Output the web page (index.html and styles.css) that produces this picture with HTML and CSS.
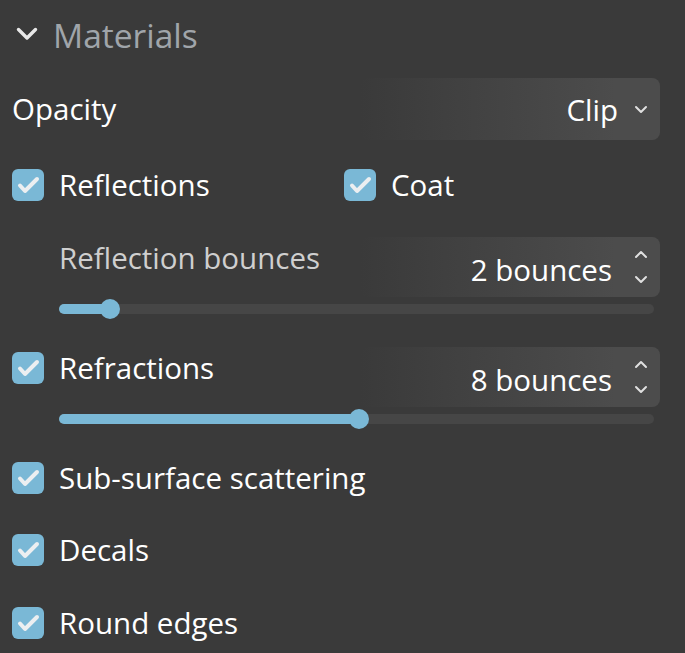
FILE: index.html
```html
<!DOCTYPE html>
<html>
<head>
<meta charset="utf-8">
<link rel="stylesheet" href="styles.css">
</head>
<body>
<div class="panel">
  <div class="header">
    <svg class="chev" width="22" height="14" viewBox="0 0 22 14"><polyline points="2.5,2.5 11,11 19.5,2.5" fill="none" stroke="#e8e8e8" stroke-width="3.4" stroke-linecap="round" stroke-linejoin="round"/></svg>
    <span class="title">Materials</span>
  </div>

  <div class="select-row">
    <span class="label">Opacity</span>
    <div class="select">
      <span class="value">Clip</span>
      <svg class="select-chev" width="14" height="9" viewBox="0 0 14 9"><polyline points="2,2 7,7 12,2" fill="none" stroke="#e0e0e0" stroke-width="2" stroke-linecap="round" stroke-linejoin="round"/></svg>
    </div>
  </div>

  <div class="check-pair">
    <div class="check-row">
      <span class="box"><svg width="32" height="32" viewBox="0 0 32 32"><polyline points="8,16.5 13,22 25,10" fill="none" stroke="#eceff1" stroke-width="4" stroke-linecap="round" stroke-linejoin="round"/></svg></span>
      <span class="label">Reflections</span>
    </div>
    <div class="check-row coat">
      <span class="box"><svg width="32" height="32" viewBox="0 0 32 32"><polyline points="8,16.5 13,22 25,10" fill="none" stroke="#eceff1" stroke-width="4" stroke-linecap="round" stroke-linejoin="round"/></svg></span>
      <span class="label">Coat</span>
    </div>
  </div>

  <div class="spin-row indent first">
    <span class="label dim">Reflection bounces</span>
    <div class="spinner">
      <span class="value">2 bounces</span>
      <span class="arrows">
        <svg width="14" height="9" viewBox="0 0 14 9"><polyline points="2,7 7,2 12,7" fill="none" stroke="#e0e0e0" stroke-width="2" stroke-linecap="round" stroke-linejoin="round"/></svg>
        <svg width="14" height="9" viewBox="0 0 14 9"><polyline points="2,2 7,7 12,2" fill="none" stroke="#e0e0e0" stroke-width="2" stroke-linecap="round" stroke-linejoin="round"/></svg>
      </span>
    </div>
  </div>
  <div class="slider"><div class="fill" style="width:51px"></div><div class="thumb" style="left:51px"></div></div>

  <div class="spin-row second">
    <span class="box"><svg width="32" height="32" viewBox="0 0 32 32"><polyline points="8,16.5 13,22 25,10" fill="none" stroke="#eceff1" stroke-width="4" stroke-linecap="round" stroke-linejoin="round"/></svg></span>
    <span class="label">Refractions</span>
    <div class="spinner">
      <span class="value">8 bounces</span>
      <span class="arrows">
        <svg width="14" height="9" viewBox="0 0 14 9"><polyline points="2,7 7,2 12,7" fill="none" stroke="#e0e0e0" stroke-width="2" stroke-linecap="round" stroke-linejoin="round"/></svg>
        <svg width="14" height="9" viewBox="0 0 14 9"><polyline points="2,2 7,7 12,2" fill="none" stroke="#e0e0e0" stroke-width="2" stroke-linecap="round" stroke-linejoin="round"/></svg>
      </span>
    </div>
  </div>
  <div class="slider"><div class="fill" style="width:300px"></div><div class="thumb" style="left:300px"></div></div>

  <div class="check-row single sss">
    <span class="box"><svg width="32" height="32" viewBox="0 0 32 32"><polyline points="8,16.5 13,22 25,10" fill="none" stroke="#eceff1" stroke-width="4" stroke-linecap="round" stroke-linejoin="round"/></svg></span>
    <span class="label">Sub-surface scattering</span>
  </div>
  <div class="check-row single decals">
    <span class="box"><svg width="32" height="32" viewBox="0 0 32 32"><polyline points="8,16.5 13,22 25,10" fill="none" stroke="#eceff1" stroke-width="4" stroke-linecap="round" stroke-linejoin="round"/></svg></span>
    <span class="label">Decals</span>
  </div>
  <div class="check-row single round">
    <span class="box"><svg width="32" height="32" viewBox="0 0 32 32"><polyline points="8,16.5 13,22 25,10" fill="none" stroke="#eceff1" stroke-width="4" stroke-linecap="round" stroke-linejoin="round"/></svg></span>
    <span class="label">Round edges</span>
  </div>
</div>
</body>
</html>
```
FILE: styles.css
```css
html, body {
  margin: 0;
  padding: 0;
  background: #3a3a3a;
  height: 100%;
  overflow: hidden;
}
.panel {
  font-family: "Open Sans", "Noto Sans", sans-serif;
  color: #ffffff;
  padding: 0 25px 0 12px;
  font-size: 29.5px;
}
.header {
  height: 70px;
  display: flex;
  align-items: center;
  padding-left: 4px;
  gap: 15px;
}
.chev { display: block; margin-top: -2px; }
.title {
  font-size: 33.5px;
  color: #a0a5aa;
}
.label {
  line-height: 42px;
  white-space: nowrap;
}
.dim { color: #cfcfcf; }
.select-row {
  margin-top: 8px;
  height: 62px;
  display: flex;
  align-items: center;
  justify-content: space-between;
}
.select {
  width: 300px;
  height: 62px;
  border-radius: 8px;
  background: linear-gradient(to right, rgba(77,77,77,0), #4c4c4c 85%);
  display: flex;
  align-items: center;
  justify-content: flex-end;
  padding-right: 12px;
  gap: 16px;
  box-sizing: border-box;
}
.check-pair {
  margin-top: 29px;
  display: flex;
}
.check-row {
  display: flex;
  align-items: center;
  height: 32px;
  gap: 15px;
}
.check-pair .check-row:first-child { width: 332px; }
.box {
  width: 32px;
  height: 32px;
  border-radius: 6px;
  background: #7ab8d6;
  flex: none;
  display: block;
}
.box svg { display: block; }
.spin-row {
  display: flex;
  align-items: flex-start;
  height: 60px;
}
.spin-row.first { margin-top: 36px; padding-left: 47px; }
.spin-row.second { margin-top: 33px; }
.spin-row.second .box { margin-top: 5px; margin-right: 15px; }
.spinner {
  margin-left: auto;
  width: 300px;
  height: 60px;
  border-radius: 8px;
  background: linear-gradient(to right, rgba(77,77,77,0), #4c4c4c 85%);
  display: flex;
  align-items: center;
  justify-content: flex-end;
  padding-right: 12px;
  box-sizing: border-box;
}
.spinner .value { margin-top: 4px; }
.arrows {
  display: flex;
  flex-direction: column;
  gap: 16px;
  margin-left: 22px;
}
.arrows svg { display: block; }
.slider {
  position: relative;
  margin: 7px 6px 0 47px;
  height: 10px;
  border-radius: 5px;
  background: #464646;
}
.fill {
  height: 10px;
  border-radius: 5px;
  background: #7ab8d6;
}
.thumb {
  position: absolute;
  top: -5px;
  width: 20px;
  height: 20px;
  margin-left: -10px;
  border-radius: 50%;
  background: #7ab8d6;
}
.sss { margin-top: 38px; }
.decals { margin-top: 40px; }
.round { margin-top: 41px; }
```
